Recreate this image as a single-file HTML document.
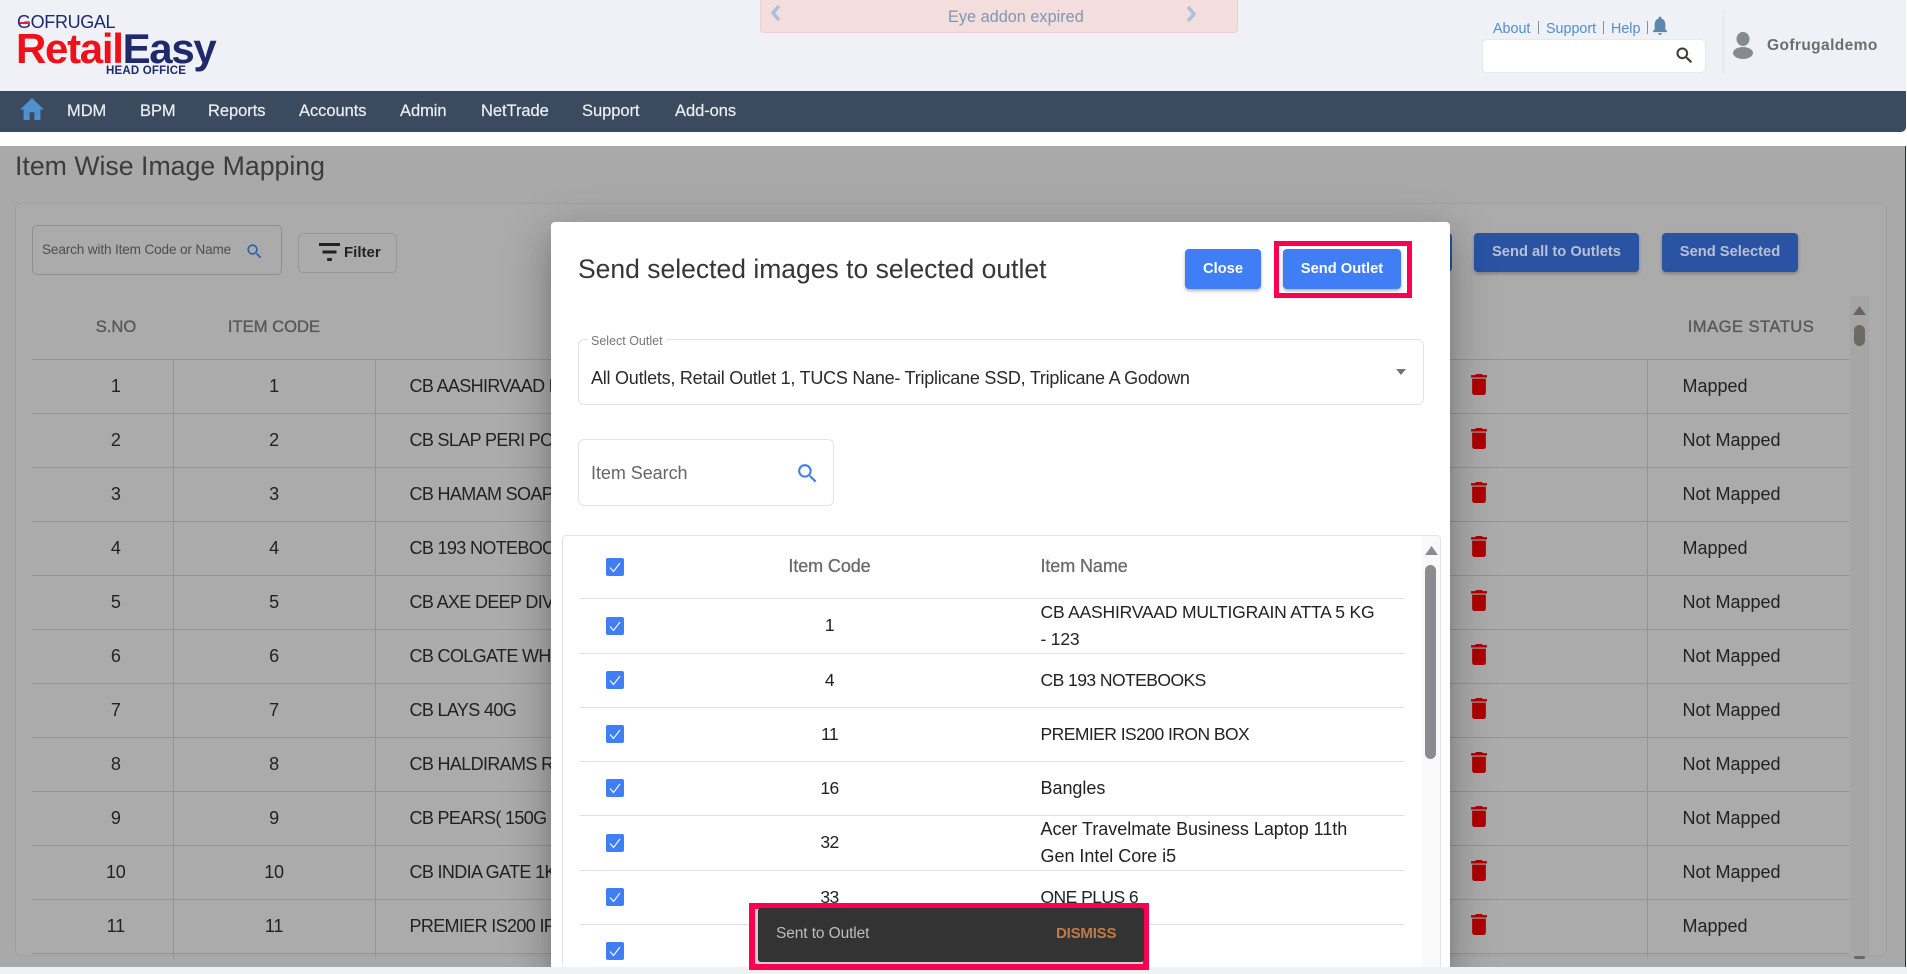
<!DOCTYPE html>
<html lang="en">
<head>
<meta charset="utf-8">
<title>Item Wise Image Mapping</title>
<style>
html,body{margin:0;padding:0;width:1907px;height:974px;overflow:hidden;background:#fff;font-family:"Liberation Sans",sans-serif;}
*{box-sizing:border-box;}
.a{position:absolute;white-space:nowrap;}
#page{position:absolute;left:0;top:146px;width:1905px;height:821px;background:#a9a9a9;overflow:hidden;border-right:0;}
#edge{position:absolute;left:1905px;top:146px;width:1px;height:821px;background:#2a2f3a;}
#card{position:absolute;left:15px;top:57px;width:1872px;height:753px;background:#ababab;border:1px solid #a0a0a0;border-radius:6px;}
#head{position:absolute;left:0;top:0;width:1906px;height:91px;background:#f0f1f7;z-index:5;}
#nav{position:absolute;left:0;top:91px;width:1906px;height:41px;background:#3b4a5f;border-radius:0 0 5px 0;z-index:5;}
#nav span{position:absolute;top:0;line-height:41px;font-size:16.5px;color:#eceef0;letter-spacing:-.05px;-webkit-text-stroke:.2px #eceef0;}
#white{position:absolute;left:0;top:132px;width:1907px;height:14px;background:#fff;z-index:5;}
#strip{position:absolute;left:0;top:967px;width:1907px;height:7px;background:#f0f1f3;z-index:5;}
#tw{position:absolute;left:32px;top:149px;width:1817px;height:663px;overflow:hidden;}
#tw table{border-collapse:collapse;table-layout:fixed;width:1817px;}
#tw th{height:64px;font-size:16.6px;font-weight:normal;color:#585858;-webkit-text-stroke:.35px #585858;text-align:center;padding:0;}
#tw td{height:54px;padding:0;font-size:18px;letter-spacing:-.2px;color:#222;text-align:center;border-top:1px solid #949494;border-left:1px solid #949494;white-space:nowrap;overflow:hidden;}
#tw th:first-child,#tw td:first-child{border-left:0;padding-left:27px;}
#tw td.r{border-right:1px solid #949494;}
#tw td.n{text-align:left;padding-left:34px;letter-spacing:-.65px;}
#tw td.s{text-align:left;padding-left:35px;letter-spacing:0;}
#tw td.d{text-align:left;padding-left:11px;border-left:0;}
#tw td.d svg{display:block;position:relative;top:-2px;}
.btn{position:absolute;border-radius:4px;text-align:center;font-weight:bold;font-size:14.7px;}
#modal{position:absolute;left:551px;top:222px;width:899px;height:745px;background:#fff;border-radius:4px 4px 0 0;box-shadow:0 11px 15px -7px rgba(0,0,0,.2),0 24px 38px 3px rgba(0,0,0,.14),0 9px 46px 8px rgba(0,0,0,.12);overflow:hidden;}
#mt{position:absolute;left:10.5px;top:313px;width:879px;height:440px;border:1px solid #e4e4e4;border-radius:4px;overflow:hidden;}
#mt table{position:absolute;left:16px;top:0;border-collapse:collapse;table-layout:fixed;width:826px;}
#mt th{height:62px;padding:0;font-size:18px;font-weight:normal;color:#6a6a6a;-webkit-text-stroke:.3px #6a6a6a;letter-spacing:-.1px;}
#mt td{padding:0;font-size:17.5px;line-height:27px;color:#222;border-top:1px solid #e2e2e2;letter-spacing:-.55px;}
#mt .c{text-align:center;}
#mt .l{text-align:left;padding-left:33px;}
#mt .m{font-size:18px;letter-spacing:-.03px;}
.cb{display:block;width:18px;height:18px;background:#3f7ef5;border-radius:2px;margin:0 0 0 27px;}
.cb svg{display:block;}
</style>
</head>
<body>

<div id="head">
  <!-- logo -->
  <div class="a" style="left:17px;top:12px;font-size:18px;line-height:20px;letter-spacing:-.35px;color:#1f2a6b;">GOFRUGAL</div>
  <div class="a" style="left:20px;top:22px;width:9px;height:2px;background:#f01a3a;"></div>
  <div class="a" style="left:16px;top:26px;font-size:42px;line-height:46px;font-weight:bold;letter-spacing:-1.3px;color:#f01018;">Retail<span style="color:#1f2a6b;">Easy</span></div>
  <div class="a" style="left:106px;top:65px;font-size:11.5px;line-height:13px;font-weight:bold;letter-spacing:.2px;color:#1f2a6b;">HEAD OFFICE</div>

  <!-- banner -->
  <div class="a" style="left:760px;top:-4px;width:478px;height:37px;background:#f4dedd;border:1px solid #eccfce;border-radius:4px;"></div>
  <div class="a" style="left:948px;top:5px;font-size:16.3px;line-height:24px;color:#7e97b3;">Eye addon expired</div>
  <svg class="a" style="left:770px;top:5px;" width="11" height="16" viewBox="0 0 11 16"><path d="M9 1 3 8l6 7" fill="none" stroke="#a9c1de" stroke-width="3.5"/></svg>
  <svg class="a" style="left:1186px;top:6px;" width="11" height="16" viewBox="0 0 11 16"><path d="M2 1l6 7-6 7" fill="none" stroke="#a9c1de" stroke-width="3.5"/></svg>

  <!-- top links -->
  <div class="a" style="left:1493px;top:19px;font-size:14.3px;line-height:20px;color:#4f8fcb;">About</div>
  <div class="a" style="left:1538px;top:21px;width:1px;height:13px;background:#8a9099;"></div>
  <div class="a" style="left:1546px;top:19px;font-size:14.3px;line-height:20px;color:#4f8fcb;">Support</div>
  <div class="a" style="left:1603px;top:21px;width:1px;height:13px;background:#8a9099;"></div>
  <div class="a" style="left:1611px;top:19px;font-size:14.3px;line-height:20px;color:#4f8fcb;">Help</div>
  <div class="a" style="left:1647px;top:21px;width:1px;height:13px;background:#8a9099;"></div>
  <svg class="a" style="left:1652px;top:16px;" width="16" height="19" viewBox="3 2 18 20" preserveAspectRatio="none"><path fill="#5f87ad" d="M12 22c1.1 0 2-.9 2-2h-4c0 1.1.9 2 2 2zm6-6v-5c0-3.07-1.63-5.64-4.5-6.32V4c0-.83-.67-1.5-1.5-1.5s-1.5.67-1.5 1.5v.68C7.63 5.36 6 7.92 6 11v5l-2 2v1h16v-1l-2-2z"/></svg>

  <div class="a" style="left:1482px;top:39px;width:224px;height:34px;background:#fff;border:1px solid #e7e8ee;border-radius:5px;"></div>
  <svg class="a" style="left:1674px;top:45px;" width="21" height="21" viewBox="0 0 24 24"><path fill="#3d3835" stroke="#3d3835" stroke-width=".4" d="M15.5 14h-.79l-.28-.27A6.471 6.471 0 0 0 16 9.5 6.5 6.5 0 1 0 9.5 16c1.61 0 3.09-.59 4.23-1.57l.27.28v.79l5 4.99L20.49 19l-4.99-5zm-6 0C7.01 14 5 11.99 5 9.5S7.01 5 9.5 5 14 7.01 14 9.5 11.99 14 9.5 14z"/></svg>
  <div class="a" style="left:1723px;top:10px;width:1px;height:63px;background:#e4e5ea;"></div>
  <svg class="a" style="left:1733px;top:32px;" width="20" height="27" viewBox="0 0 20 27"><ellipse cx="10" cy="7" rx="6.5" ry="7" fill="#858b92"/><ellipse cx="10" cy="21" rx="10" ry="6" fill="#858b92"/></svg>
  <div class="a" style="left:1767px;top:35px;font-size:15.5px;line-height:22px;font-weight:bold;color:#6d6d6f;letter-spacing:.4px;">Gofrugaldemo</div>
</div>

<div id="nav">
  <svg class="a" style="left:20px;top:7px;" width="24" height="22" viewBox="2 3 20 17" preserveAspectRatio="none"><path fill="#4f90cf" d="M10 20v-6h4v6h5v-8h3L12 3 2 12h3v8z"/></svg>
  <span style="left:67px;">MDM</span>
  <span style="left:140px;">BPM</span>
  <span style="left:208px;">Reports</span>
  <span style="left:299px;">Accounts</span>
  <span style="left:400px;">Admin</span>
  <span style="left:481px;">NetTrade</span>
  <span style="left:582px;">Support</span>
  <span style="left:675px;">Add-ons</span>
</div>
<div id="white"></div>

<div id="page">
  <div class="a" style="left:15px;top:3px;font-size:26.7px;line-height:34px;color:#3c3c3c;">Item Wise Image Mapping</div>
  <div id="card"></div>

  <!-- toolbar -->
  <div class="a" style="left:32px;top:79px;width:250px;height:50px;border:1px solid #8f8f8f;border-radius:5px;"></div>
  <div class="a" style="left:42px;top:94px;font-size:13.6px;line-height:20px;letter-spacing:-.15px;color:#4e4e4e;">Search with Item Code or Name</div>
  <svg class="a" style="left:245px;top:96px;" width="19" height="19" viewBox="0 0 24 24"><path fill="#2a5eb0" d="M15.5 14h-.79l-.28-.27A6.471 6.471 0 0 0 16 9.5 6.5 6.5 0 1 0 9.5 16c1.61 0 3.09-.59 4.23-1.57l.27.28v.79l5 4.99L20.49 19l-4.99-5zm-6 0C7.01 14 5 11.99 5 9.5S7.01 5 9.5 5 14 7.01 14 9.5 11.99 14 9.5 14z"/></svg>
  <div class="a" style="left:298px;top:87px;width:99px;height:40px;border:1px solid #979797;border-radius:5px;"></div>
  <svg class="a" style="left:319px;top:97px;" width="21" height="18" viewBox="3 6 18 12" preserveAspectRatio="none"><path fill="#222" d="M10 18h4v-2h-4v2zM3 6v2h18V6H3zm3 7h12v-2H6v2z"/></svg>
  <div class="a" style="left:344px;top:97px;font-size:15px;line-height:20px;font-weight:bold;color:#222;">Filter</div>

  <div class="btn" style="left:1420px;top:87px;width:32px;height:39px;background:#2b53a4;"></div>
  <div class="btn" style="left:1474px;top:87px;width:165px;height:39px;line-height:38px;background:#2b53a4;color:#b6c1d4;box-shadow:0 2px 3px rgba(0,0,0,.25);">Send all to Outlets</div>
  <div class="btn" style="left:1662px;top:87px;width:136px;height:39px;line-height:38px;background:#2b53a4;color:#b6c1d4;box-shadow:0 2px 3px rgba(0,0,0,.25);">Send Selected</div>

  <!-- scrollbar -->
  <div class="a" style="left:1850px;top:150px;width:19px;height:662px;background:#a6a6a6;"></div>
  <svg class="a" style="left:1853px;top:160px;" width="13" height="10" viewBox="0 0 13 10"><path d="M6.5 0 13 9H0z" fill="#6a6460"/></svg>
  <div class="a" style="left:1854px;top:179px;width:11px;height:21px;background:#6f6963;border-radius:6px;"></div>
  <div class="a" style="left:1854px;top:810px;width:11px;height:3px;background:#6f6963;border-radius:2px;"></div>

  <!-- table -->
  <div id="tw">
    <table>
      <colgroup><col style="width:141px"><col style="width:202px"><col style="width:1085px"><col style="width:187px"><col style="width:202px"></colgroup>
      <thead><tr><th>S.NO</th><th>ITEM CODE</th><th></th><th></th><th style="padding-left:6px;letter-spacing:.45px;">IMAGE STATUS</th></tr></thead>
      <tbody>
        <tr><td>1</td><td>1</td><td class="n">CB AASHIRVAAD MULTIGRAIN ATTA 5 KG - 123</td><td class="d"><svg width="16" height="21" viewBox="5 3 14 18" preserveAspectRatio="none"><path fill="#ad0000" d="M6 19c0 1.1.9 2 2 2h8c1.1 0 2-.9 2-2V7H6v12zM19 4h-3.5l-1-1h-5l-1 1H5v2h14V4z"/></svg></td><td class="s r">Mapped</td></tr>
        <tr><td>2</td><td>2</td><td class="n">CB SLAP PERI POWDER</td><td class="d"><svg width="16" height="21" viewBox="5 3 14 18" preserveAspectRatio="none"><path fill="#ad0000" d="M6 19c0 1.1.9 2 2 2h8c1.1 0 2-.9 2-2V7H6v12zM19 4h-3.5l-1-1h-5l-1 1H5v2h14V4z"/></svg></td><td class="s r">Not Mapped</td></tr>
        <tr><td>3</td><td>3</td><td class="n">CB HAMAM SOAP</td><td class="d"><svg width="16" height="21" viewBox="5 3 14 18" preserveAspectRatio="none"><path fill="#ad0000" d="M6 19c0 1.1.9 2 2 2h8c1.1 0 2-.9 2-2V7H6v12zM19 4h-3.5l-1-1h-5l-1 1H5v2h14V4z"/></svg></td><td class="s r">Not Mapped</td></tr>
        <tr><td>4</td><td>4</td><td class="n">CB 193 NOTEBOOKS</td><td class="d"><svg width="16" height="21" viewBox="5 3 14 18" preserveAspectRatio="none"><path fill="#ad0000" d="M6 19c0 1.1.9 2 2 2h8c1.1 0 2-.9 2-2V7H6v12zM19 4h-3.5l-1-1h-5l-1 1H5v2h14V4z"/></svg></td><td class="s r">Mapped</td></tr>
        <tr><td>5</td><td>5</td><td class="n">CB AXE DEEP DIVE</td><td class="d"><svg width="16" height="21" viewBox="5 3 14 18" preserveAspectRatio="none"><path fill="#ad0000" d="M6 19c0 1.1.9 2 2 2h8c1.1 0 2-.9 2-2V7H6v12zM19 4h-3.5l-1-1h-5l-1 1H5v2h14V4z"/></svg></td><td class="s r">Not Mapped</td></tr>
        <tr><td>6</td><td>6</td><td class="n">CB COLGATE WHITE</td><td class="d"><svg width="16" height="21" viewBox="5 3 14 18" preserveAspectRatio="none"><path fill="#ad0000" d="M6 19c0 1.1.9 2 2 2h8c1.1 0 2-.9 2-2V7H6v12zM19 4h-3.5l-1-1h-5l-1 1H5v2h14V4z"/></svg></td><td class="s r">Not Mapped</td></tr>
        <tr><td>7</td><td>7</td><td class="n">CB LAYS 40G</td><td class="d"><svg width="16" height="21" viewBox="5 3 14 18" preserveAspectRatio="none"><path fill="#ad0000" d="M6 19c0 1.1.9 2 2 2h8c1.1 0 2-.9 2-2V7H6v12zM19 4h-3.5l-1-1h-5l-1 1H5v2h14V4z"/></svg></td><td class="s r">Not Mapped</td></tr>
        <tr><td>8</td><td>8</td><td class="n">CB HALDIRAMS RASGULLA</td><td class="d"><svg width="16" height="21" viewBox="5 3 14 18" preserveAspectRatio="none"><path fill="#ad0000" d="M6 19c0 1.1.9 2 2 2h8c1.1 0 2-.9 2-2V7H6v12zM19 4h-3.5l-1-1h-5l-1 1H5v2h14V4z"/></svg></td><td class="s r">Not Mapped</td></tr>
        <tr><td>9</td><td>9</td><td class="n">CB PEARS( 150G , 3N )</td><td class="d"><svg width="16" height="21" viewBox="5 3 14 18" preserveAspectRatio="none"><path fill="#ad0000" d="M6 19c0 1.1.9 2 2 2h8c1.1 0 2-.9 2-2V7H6v12zM19 4h-3.5l-1-1h-5l-1 1H5v2h14V4z"/></svg></td><td class="s r">Not Mapped</td></tr>
        <tr><td>10</td><td>10</td><td class="n">CB INDIA GATE 1KG</td><td class="d"><svg width="16" height="21" viewBox="5 3 14 18" preserveAspectRatio="none"><path fill="#ad0000" d="M6 19c0 1.1.9 2 2 2h8c1.1 0 2-.9 2-2V7H6v12zM19 4h-3.5l-1-1h-5l-1 1H5v2h14V4z"/></svg></td><td class="s r">Not Mapped</td></tr>
        <tr><td>11</td><td>11</td><td class="n">PREMIER IS200 IRON BOX</td><td class="d"><svg width="16" height="21" viewBox="5 3 14 18" preserveAspectRatio="none"><path fill="#ad0000" d="M6 19c0 1.1.9 2 2 2h8c1.1 0 2-.9 2-2V7H6v12zM19 4h-3.5l-1-1h-5l-1 1H5v2h14V4z"/></svg></td><td class="s r">Mapped</td></tr>
        <tr><td></td><td></td><td></td><td class="d"></td><td class="r"></td></tr>
      </tbody>
    </table>
  </div>
</div>
<div id="edge"></div>

<!-- modal -->
<div id="modal">
  <div class="a" style="left:27px;top:32px;font-size:26.5px;line-height:30px;color:#363636;">Send selected images to selected outlet</div>
  <div class="btn" style="left:634px;top:27px;width:76px;height:40px;line-height:40px;background:#3f7ef5;color:#fff;box-shadow:0 2px 3px rgba(0,0,0,.3);">Close</div>
  <div class="btn" style="left:732px;top:27px;width:118px;height:40px;line-height:40px;background:#3f7ef5;color:#fff;box-shadow:0 2px 3px rgba(0,0,0,.3);">Send Outlet</div>

  <div class="a" style="left:27px;top:117px;width:846px;height:66px;border:1px solid #e4e4e4;border-radius:6px;"></div>
  <div class="a" style="left:37px;top:110px;background:#fff;padding:0 3px;font-size:12.5px;line-height:18px;color:#777;">Select Outlet</div>
  <div class="a" style="left:40px;top:144px;font-size:18px;line-height:24px;letter-spacing:-.24px;color:#2a2a2a;">All Outlets, Retail Outlet 1, TUCS Nane- Triplicane SSD, Triplicane A Godown</div>
  <svg class="a" style="left:845px;top:147px;" width="10" height="6" viewBox="0 0 10 6"><path d="M0 0h10L5 6z" fill="#757575"/></svg>

  <div class="a" style="left:27px;top:217px;width:256px;height:67px;border:1px solid #e4e4e4;border-radius:6px;"></div>
  <div class="a" style="left:40px;top:239px;font-size:18px;line-height:24px;letter-spacing:-.05px;color:#666;">Item Search</div>
  <svg class="a" style="left:244px;top:239px;" width="25" height="25" viewBox="0 0 24 24"><path fill="#3d7fe6" d="M15.5 14h-.79l-.28-.27A6.471 6.471 0 0 0 16 9.5 6.5 6.5 0 1 0 9.5 16c1.61 0 3.09-.59 4.23-1.57l.27.28v.79l5 4.99L20.49 19l-4.99-5zm-6 0C7.01 14 5 11.99 5 9.5S7.01 5 9.5 5 14 7.01 14 9.5 11.99 14 9.5 14z"/></svg>

  <div id="mt">
    <table>
      <colgroup><col style="width:73px"><col style="width:356px"><col style="width:397px"></colgroup>
      <thead><tr><th><span class="cb"><svg width="18" height="18" viewBox="0 0 18 18"><path d="M4 9.5l3.5 4L14 5" fill="none" stroke="#fff" stroke-width="1.1"/></svg></span></th><th class="c">Item Code</th><th class="l">Item Name</th></tr></thead>
      <tbody>
        <tr style="height:55px"><td><span class="cb"><svg width="18" height="18" viewBox="0 0 18 18"><path d="M4 9.5l3.5 4L14 5" fill="none" stroke="#fff" stroke-width="1.1"/></svg></span></td><td class="c">1</td><td class="l" style="letter-spacing:-.2px;">CB AASHIRVAAD MULTIGRAIN ATTA 5 KG<br>- 123</td></tr>
        <tr style="height:54px"><td><span class="cb"><svg width="18" height="18" viewBox="0 0 18 18"><path d="M4 9.5l3.5 4L14 5" fill="none" stroke="#fff" stroke-width="1.1"/></svg></span></td><td class="c">4</td><td class="l">CB 193 NOTEBOOKS</td></tr>
        <tr style="height:54px"><td><span class="cb"><svg width="18" height="18" viewBox="0 0 18 18"><path d="M4 9.5l3.5 4L14 5" fill="none" stroke="#fff" stroke-width="1.1"/></svg></span></td><td class="c">11</td><td class="l">PREMIER IS200 IRON BOX</td></tr>
        <tr style="height:54px"><td><span class="cb"><svg width="18" height="18" viewBox="0 0 18 18"><path d="M4 9.5l3.5 4L14 5" fill="none" stroke="#fff" stroke-width="1.1"/></svg></span></td><td class="c">16</td><td class="l m">Bangles</td></tr>
        <tr style="height:55px"><td><span class="cb"><svg width="18" height="18" viewBox="0 0 18 18"><path d="M4 9.5l3.5 4L14 5" fill="none" stroke="#fff" stroke-width="1.1"/></svg></span></td><td class="c">32</td><td class="l m">Acer Travelmate Business Laptop 11th<br>Gen Intel Core i5</td></tr>
        <tr style="height:54px"><td><span class="cb"><svg width="18" height="18" viewBox="0 0 18 18"><path d="M4 9.5l3.5 4L14 5" fill="none" stroke="#fff" stroke-width="1.1"/></svg></span></td><td class="c">33</td><td class="l">ONE PLUS 6</td></tr>
        <tr style="height:54px"><td><span class="cb"><svg width="18" height="18" viewBox="0 0 18 18"><path d="M4 9.5l3.5 4L14 5" fill="none" stroke="#fff" stroke-width="1.1"/></svg></span></td><td class="c"></td><td class="l"></td></tr>
      </tbody>
    </table>
    <div class="a" style="left:859px;top:0;width:19px;height:440px;background:#f9f9f9;"></div>
    <svg class="a" style="left:862px;top:10px;" width="13" height="10" viewBox="0 0 13 10"><path d="M6.5 0 13 9H0z" fill="#8c8c90"/></svg>
    <div class="a" style="left:862px;top:29px;width:11px;height:194px;background:#8c8c90;border-radius:6px;"></div>
  </div>
</div>

<div id="strip"></div>

<!-- highlight boxes -->
<div class="a" style="left:1274px;top:241px;width:138px;height:57px;border:5px solid #fb0050;z-index:8;"></div>
<div class="a" style="left:749px;top:903px;width:400px;height:67px;border:6px solid #fb0050;background:#cfcfcf;z-index:8;"></div>
<div class="a" style="left:758px;top:908px;width:386px;height:54px;background:#333;border-radius:3px;z-index:9;"></div>
<div class="a" style="left:776px;top:924px;font-size:15.5px;line-height:20px;letter-spacing:-.1px;color:#bdbdbd;z-index:10;">Sent to Outlet</div>
<div class="a" style="left:1056px;top:924px;font-size:15px;line-height:20px;font-weight:bold;letter-spacing:-.2px;color:#c27a45;z-index:10;">DISMISS</div>

</body>
</html>
